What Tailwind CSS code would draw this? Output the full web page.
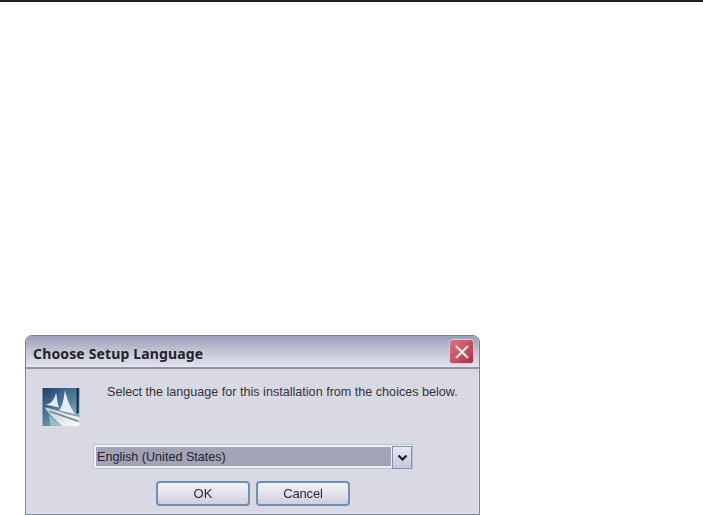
<!DOCTYPE html>
<html><head><meta charset="utf-8"><script src="https://cdn.jsdelivr.net/npm/@tailwindcss/browser@4"></script></head>
<body class="bg-white overflow-hidden w-[703px] h-[515px] font-['Liberation_Sans',sans-serif]">
<div class="h-[2px] bg-[#231f20]"></div>
<div class="ml-[25px] mt-[333px] w-[455px] h-[180px] flex flex-col rounded-t-[7px] border border-[#7d81a0] bg-[#d9d9e3] blur-[0.5px]">
  <div class="h-[33px] shrink-0 flex items-center justify-between pl-[7px] pr-[5px] rounded-t-[6px] bg-gradient-to-b from-[#9c9eb9] via-[#c4c5d5] to-[#e4e4ec] border-b-2 border-[#8f93ad]">
    <span class="text-[14px] font-bold tracking-[0.15px] text-[#23232e] font-['Noto_Sans',sans-serif] leading-[20px] mt-[4px]">Choose Setup Language</span>
    <div class="w-[25px] h-[25px] rounded-[3px] bg-gradient-to-br from-[#e0727f] to-[#b5283f] border border-[#c9d0dc] flex items-center justify-center">
      <svg width="16" height="16" viewBox="0 0 16 16"><path d="M2 2 L14 14 M14 2 L2 14" stroke="#f6e9ea" stroke-width="2.4" fill="none"/></svg>
    </div>
  </div>
  <div class="flex-1 flex flex-col border-x border-b border-[#dfe0e8]">
    <div class="flex pl-[15px] pt-[19px] h-[75px]">
      <svg width="38" height="38" viewBox="0 0 38 39" class="shrink-0">
        <defs>
          <linearGradient id="ic" x1="0" y1="0" x2="0.7" y2="1"><stop offset="0" stop-color="#1d3f6b"/><stop offset="0.55" stop-color="#4d7d9d"/><stop offset="1" stop-color="#8fb2c0"/></linearGradient>
          <linearGradient id="wv" x1="0" y1="0" x2="1" y2="0.6"><stop offset="0" stop-color="#b9c6cf"/><stop offset="1" stop-color="#f6f6f6"/></linearGradient>
        </defs>
        <rect width="38" height="39" fill="url(#ic)"/>
        <rect x="35" y="0" width="2" height="26" fill="#14263f"/>
        <path d="M3 17 C9 17 12 12 14 5 C15 10 15 15 17 20 Z" fill="#e6ebf0"/>
        <path d="M17 23 C21 18 22 10 23 2 C25 10 28 20 34 27 Z" fill="#e8ecf0"/>
        <path d="M2 20 C12 21 24 27 38 30 L38 39 L20 39 C13 33 7 27 2 20 Z" fill="url(#wv)"/>
        <path d="M7 24 C15 26 26 31 37 34" stroke="#6f8090" stroke-width="1.6" fill="none"/>
        <path d="M7 28 C11 32 15 36 20 39 L8 39 Z" fill="#9fbac6"/>
      </svg>
      <p class="ml-[27px] mt-[-4px] text-[12.6px] leading-[16px] text-[#33333d] whitespace-nowrap">Select the language for this installation from the choices below.</p>
    </div>
    <div class="ml-[66px] w-[320px] h-[25px] flex border border-[#b4c4d6] bg-[#eef0f4] p-[2px]">
      <div class="flex-1 bg-[#a2a3b5] text-[12.6px] leading-[21px] pl-[1px] text-[#24242c]">English (United States)</div>
      <div class="w-[20px] h-[23px] -my-[1px] -mr-[2px] ml-[1px] border border-[#7b93a8] bg-gradient-to-b from-[#e8e8f2] to-[#c6c6e0] flex items-center justify-center">
        <svg width="11" height="8" viewBox="0 0 11 8"><path d="M1.5 1.5 L5.5 5.5 L9.5 1.5" stroke="#1c1c28" stroke-width="2.2" fill="none"/></svg>
      </div>
    </div>
    <div class="flex gap-[6px] ml-[129px] mt-[12px]">
      <button class="w-[94px] h-[25px] rounded-[4px] border-2 border-[#6f8fb8] bg-gradient-to-b from-[#f4f4f8] to-[#cfcfdc] text-[13px] text-[#2a2a34]">OK</button>
      <button class="w-[94px] h-[25px] rounded-[4px] border-2 border-[#6f8fb8] bg-gradient-to-b from-[#f4f4f8] to-[#cfcfdc] text-[13px] tracking-[-0.2px] text-[#2a2a34]">Cancel</button>
    </div>
  </div>
</div>
</body></html>
